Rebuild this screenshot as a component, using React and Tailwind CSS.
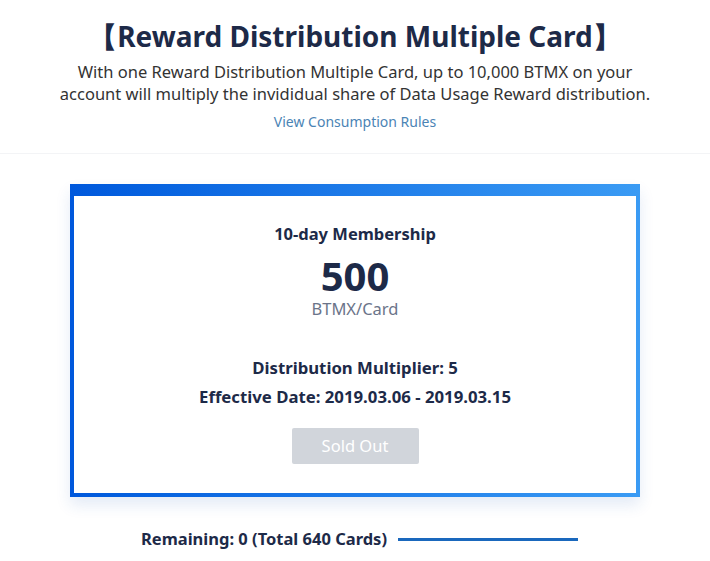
const App = () => {
  return (
    <div className="min-h-screen bg-white" style={{ fontFamily: '"Noto Sans", "Open Sans", sans-serif' }}>
      {/* Header */}
      <div className="pt-[14px] pb-[20px] text-center border-b border-gray-100">
        <h1 className="text-[28px] leading-[44px] font-bold text-[#1d2a48]">【Reward Distribution Multiple Card】</h1>
        <p className="mt-[3px] text-[16.5px] leading-[22px] text-[#333]">
          With one Reward Distribution Multiple Card, up to 10,000 BTMX on your
          <br />
          account will multiply the invididual share of Data Usage Reward distribution.
        </p>
        <a className="mt-[7px] inline-block text-[14px] leading-[20px] text-[#4b84b5]">View Consumption Rules</a>
      </div>

      {/* Card */}
      <div className="px-[70px] pt-[30px]">
        <div className="bg-gradient-to-r from-[#0058dc] to-[#3a9bf4] pt-[12px] px-[4px] pb-[4px] shadow-[0_8px_14px_rgba(30,90,180,0.12)]">
          <div className="bg-white flex flex-col items-center pt-[26px] pb-[29px] text-[#1d2a48]">
            <div className="text-[16.5px] leading-[24px] font-bold">10-day Membership</div>
            <div className="mt-[10px] text-[40px] leading-[40px] font-bold">500</div>
            <div className="mt-[2px] text-[16.5px] leading-[22px] text-[#6b7489]">BTMX/Card</div>
            <div className="mt-[36px] text-[16.75px] leading-[24px] font-bold">Distribution Multiplier: 5</div>
            <div className="mt-[5px] text-[16.75px] leading-[24px] font-bold">Effective Date: 2019.03.06 - 2019.03.15</div>
            <button className="mt-[19px] w-[127px] h-[36px] rounded-[2px] bg-[#d1d5db] text-white text-[16.5px]">Sold Out</button>
          </div>
        </div>
      </div>

      {/* Remaining */}
      <div className="mt-[30px] flex items-center pl-[141px]">
        <span className="text-[16.5px] leading-[24px] font-bold text-[#1d2a48]">Remaining: 0 (Total 640 Cards)</span>
        <div className="ml-[11px] w-[180px] h-[3px] bg-[#1a68bd]" />
      </div>
    </div>
  );
};

export default App;
